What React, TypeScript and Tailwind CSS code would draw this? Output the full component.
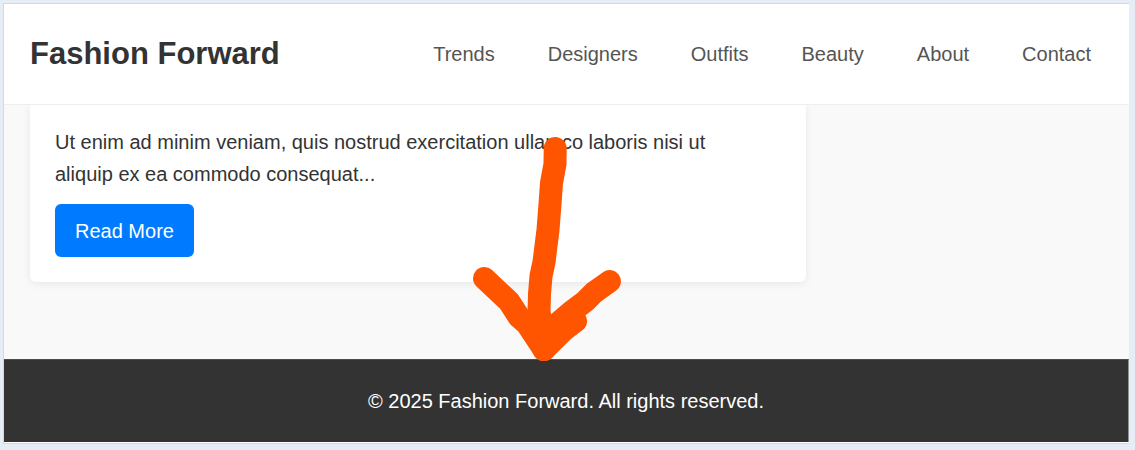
const links = ["Trends", "Designers", "Outfits", "Beauty", "About", "Contact"];

function Header() {
  return (
    <header className="flex h-[101px] items-center justify-between border-b border-[#eeeeee] bg-white pr-[38px] pl-[26px]">
      <h1 className="text-[31px] leading-10 font-bold whitespace-nowrap text-[#333333]">Fashion Forward</h1>
      <nav aria-label="Main">
        <ul className="flex gap-[53px] text-xl text-[#555555]">
          {links.map((label) => (
            <li key={label}>
              <a href={`#${label.toLowerCase()}`}>{label}</a>
            </li>
          ))}
        </ul>
      </nav>
    </header>
  );
}

function ArticleCard() {
  return (
    <article className="w-[776px] max-w-full rounded-b-md bg-white px-[25px] pt-[21px] pb-[25px] shadow-[0_2px_8px_rgba(0,0,0,0.07)]">
      <p className="max-w-[680px] text-xl leading-8 text-[#333333]">
        Ut enim ad minim veniam, quis nostrud exercitation ullamco laboris nisi ut aliquip ex ea commodo consequat...
      </p>
      <a
        href="#article"
        className="mt-[14px] inline-flex h-[53px] items-center rounded-md bg-[#007bff] px-5 align-top text-xl text-white"
      >
        Read More
      </a>
    </article>
  );
}

function Arrow() {
  return (
    <svg
      aria-hidden="true"
      className="pointer-events-none absolute top-[137px] left-[472px] h-[225px] w-[150px]"
      viewBox="472 137 150 225"
      fill="none"
      stroke="#ff5500"
      strokeWidth="22.6"
      strokeLinecap="round"
      strokeLinejoin="round"
    >
      <path strokeWidth="23" d="M555.2 148.6L555 164L551.5 183L550 204L548 230L544 262L541 276L539.5 294L539 311L542 335" />
      <path d="M484.3 278.2L509 301.5L519 317L527 324L544 349.7" />
      <path d="M609.6 281.4L594 292.5L585 301.5L571 312L551 329L544 349.7" />
      <path d="M575.8 321L564 330L544 349.7" />
      <path stroke="none" fill="#ff5500" d="M520 322L552 322L580 308L576 324L546 354L536 346Z" />
    </svg>
  );
}

export default function App() {
  return (
    <div className="relative bg-[#e7edf5] pt-[3px] pr-[6px] pb-[6px] pl-[3px] font-['Liberation_Sans',Arial,sans-serif]">
      <div className="border-t border-b border-l border-[#d4d9df] bg-white pb-px">
        <Header />
        <main className="overflow-hidden bg-[#f9f9f9] px-[26px] pb-[77px]">
          <ArticleCard />
        </main>
        <footer className="border-t border-r border-t-[#4c4c4c] border-r-[#929292] bg-[#333333] px-6 pt-[25px] pb-[25px] text-center text-xl leading-8 text-white">
          <p>© 2025 Fashion Forward. All rights reserved.</p>
        </footer>
      </div>
      <Arrow />
    </div>
  );
}
